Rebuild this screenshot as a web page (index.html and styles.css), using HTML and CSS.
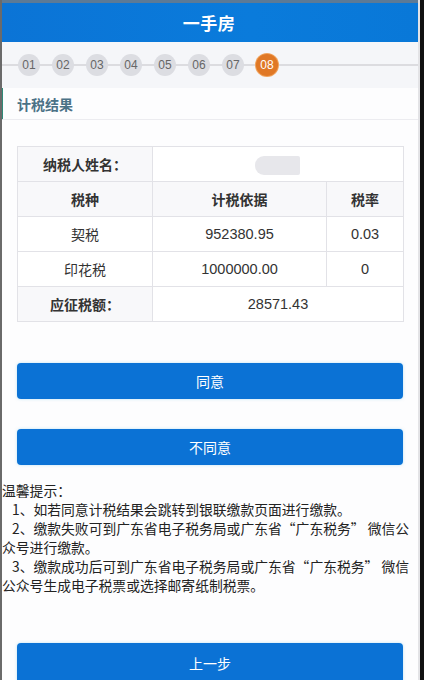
FILE: index.html
```html
<!DOCTYPE html>
<html lang="zh-CN">
<head>
<meta charset="utf-8">
<title>一手房</title>
<link rel="stylesheet" href="styles.css">
</head>
<body>
<div class="page">
  <div class="inner">
    <header class="topbar"><h1 class="topbar-title">一手房</h1></header>
    <div class="steps">
      <span class="step">01</span>
      <span class="step">02</span>
      <span class="step">03</span>
      <span class="step">04</span>
      <span class="step">05</span>
      <span class="step">06</span>
      <span class="step">07</span>
      <span class="step step-active">08</span>
    </div>
    <div class="section-title">计税结果</div>
    <div class="content">
      <table class="result">
        <colgroup><col class="c1"><col class="c2"><col class="c3"></colgroup>
        <tr>
          <th class="label">纳税人姓名：</th>
          <td colspan="2"><span class="blurred"></span></td>
        </tr>
        <tr>
          <th class="label">税种</th>
          <th class="label">计税依据</th>
          <th class="label">税率</th>
        </tr>
        <tr>
          <td>契税</td>
          <td class="num">952380.95</td>
          <td class="num">0.03</td>
        </tr>
        <tr>
          <td>印花税</td>
          <td class="num">1000000.00</td>
          <td class="num">0</td>
        </tr>
        <tr>
          <th class="label">应征税额：</th>
          <td colspan="2" class="num">28571.43</td>
        </tr>
      </table>
      <button class="btn btn-agree">同意</button>
      <button class="btn btn-disagree">不同意</button>
    </div>
    <div class="tips">
      <p class="tips-head">温馨提示：</p>
      <p class="tip">1、如若同意计税结果会跳转到银联缴款页面进行缴款。</p>
      <p class="tip">2、缴款失败可到广东省电子税务局或广东省“广东税务” 微信公<br>众号进行缴款。</p>
      <p class="tip">3、缴款成功后可到广东省电子税务局或广东省“广东税务” 微信<br>公众号生成电子税票或选择邮寄纸制税票。</p>
    </div>
    <div class="content content-bottom">
      <button class="btn btn-prev">上一步</button>
    </div>
  </div>
</div>
</body>
</html>
```

FILE: styles.css
```css
html, body {
  margin: 0;
  padding: 0;
  background: #111;
}
body {
  font-family: "Noto Sans CJK SC", "Liberation Sans", sans-serif;
  color: #333;
}
.page {
  width: 424px;
  height: 680px;
  box-sizing: border-box;
  border-left: 2px solid #6a6a6a;
  border-right: 4px solid #111;
  overflow: hidden;
  background: #fdfdfe;
}
.inner {
  border-right: 2px solid #e3e3e6;
  min-height: 680px;
  background: #fdfdfe;
}
.topbar {
  height: 39px;
  border-top: 3px solid #5c7a96;
  background: linear-gradient(90deg, #0b74d6, #0a7bdb 60%, #0978d8);
  display: flex;
  align-items: center;
  justify-content: center;
  margin-left: -2px;
}
.topbar-title {
  margin: 0;
  font-size: 17px;
  font-weight: bold;
  color: #fff;
  letter-spacing: 0.5px;
}
.steps {
  height: 46px;
  display: flex;
  align-items: center;
  gap: 12px;
  padding-left: 16px;
  background: linear-gradient(#dcdce0, #dcdce0) no-repeat 0 22px / 100% 2px, #f5f6f9;
}
.step {
  width: 22px;
  height: 22px;
  border-radius: 50%;
  background: #dcdde2;
  color: #666;
  font-family: "Liberation Sans", sans-serif;
  font-size: 12px;
  display: flex;
  align-items: center;
  justify-content: center;
}
.step-active {
  background: #e07826;
  color: #fff;
  box-shadow: 0 0 0 1px #f0a25c;
}
.section-title {
  height: 31px;
  margin-left: -2px;
  border-left: 3px solid #2f8a78;
  padding-left: 14px;
  border-bottom: 1px solid #ececf0;
  display: flex;
  align-items: center;
  font-size: 14px;
  font-weight: bold;
  color: #4b7286;
}
.content {
  padding: 26px 15px 0;
  display: flex;
  flex-direction: column;
}
.result {
  width: 386px;
  border-collapse: collapse;
  table-layout: fixed;
  background: #fff;
}
.c1 { width: 135px; }
.c2 { width: 174px; }
.c3 { width: 77px; }
.result th, .result td {
  border: 1px solid #e2e2e7;
  height: 34px;
  padding: 0;
  text-align: center;
  font-size: 14px;
  color: #333;
}
.result th.label {
  font-weight: bold;
  background: #f8f8fa;
}
.result td.num {
  font-family: "Liberation Sans", sans-serif;
  font-size: 14.5px;
}
.blurred {
  display: inline-block;
  width: 45px;
  height: 19px;
  border-radius: 9px 2px 2px 9px;
  background: #e7e7eb;
  vertical-align: middle;
  margin-right: 2px;
}
.btn {
  height: 36px;
  border: none;
  border-radius: 4px;
  background: #0b72d5;
  color: #fff;
  font-family: "Noto Sans CJK SC", sans-serif;
  font-size: 14px;
  padding: 0;
  box-shadow: 0 0 3px rgba(120, 200, 240, 0.5);
}
.btn-agree { margin-top: 41px; }
.btn-disagree { margin-top: 30px; }
.tips {
  padding-top: 16px;
  font-size: 13.8px;
  line-height: 19px;
  color: #222;
  white-space: nowrap;
}
.tips p {
  margin: 0;
}
.tip {
  text-indent: 10px;
}
.content-bottom {
  padding-top: 48px;
}
.btn-prev {
  height: 40px;
}
```
